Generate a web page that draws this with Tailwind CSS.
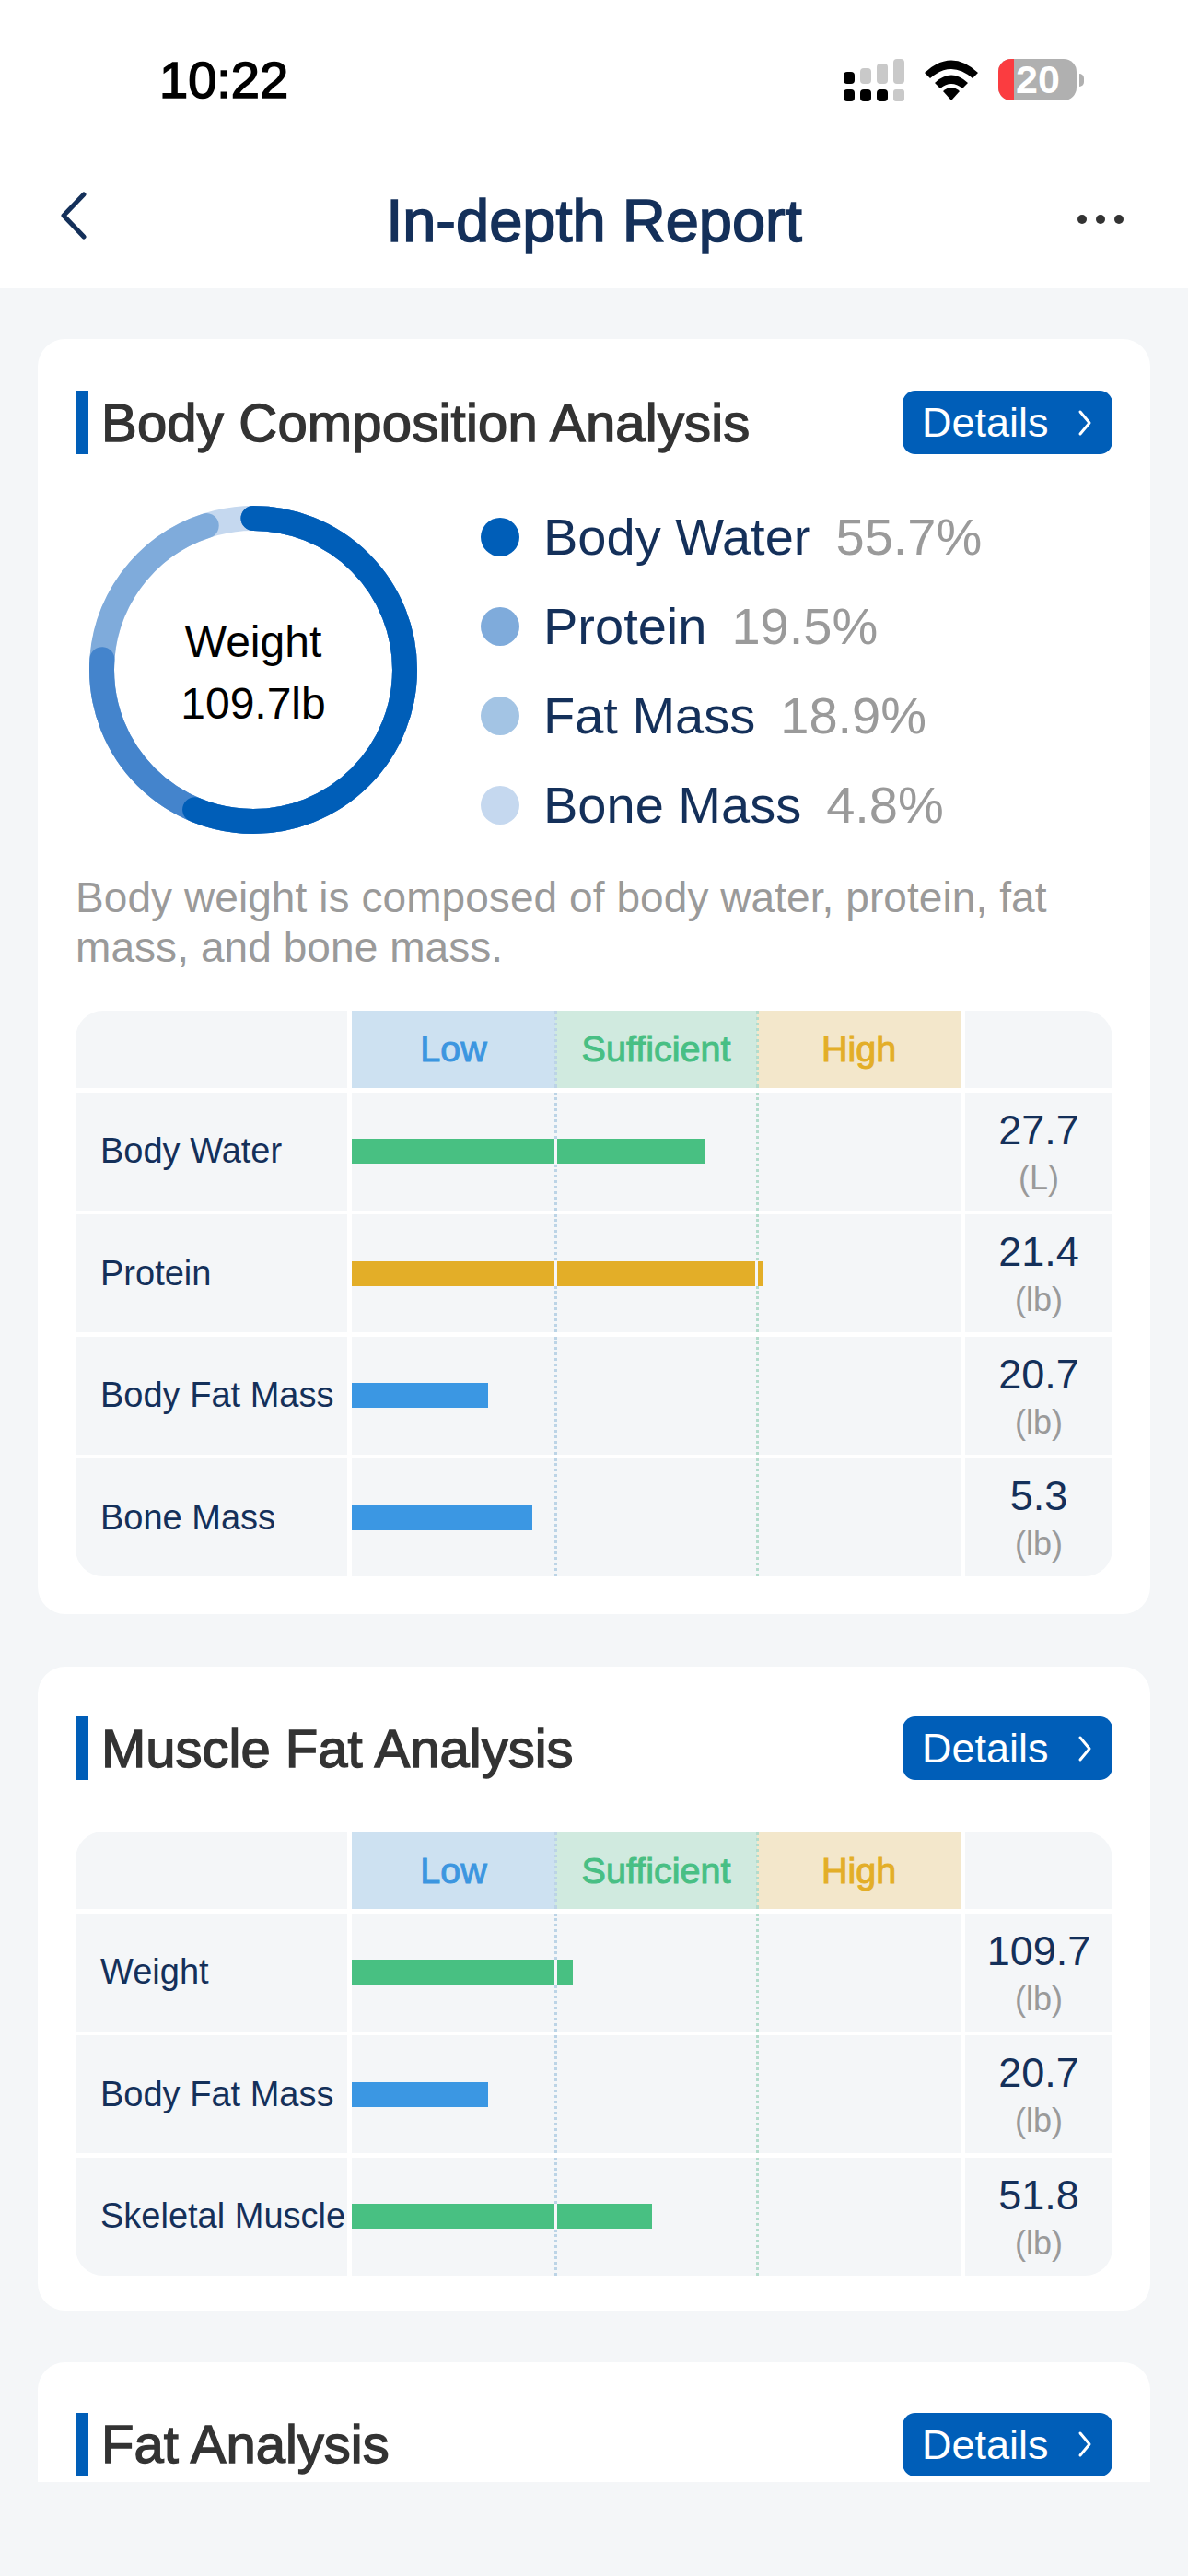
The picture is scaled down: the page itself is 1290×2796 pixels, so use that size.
<!DOCTYPE html>
<html lang="en">
<head>
<meta charset="utf-8">
<title>In-depth Report</title>
<script src="https://cdn.jsdelivr.net/npm/@tailwindcss/browser@4"></script>
</head>
<body class="bg-[#f4f6f8] font-['Liberation_Sans',sans-serif]">
<div class="w-[1290px] h-[2796px] overflow-hidden bg-[#f4f6f8]">
  <!-- status + nav -->
  <header class="bg-white h-[313px]">
    <div class="h-[175px] relative">
      <div class="flex items-center justify-between h-[175px] pl-[173px] pr-[113px]">
        <span class="text-[56px] leading-none text-black [-webkit-text-stroke:1.6px_#000] -mt-[1px]">10:22</span>
        <div class="flex items-center pb-[2px]">
          <svg width="66" height="46" viewBox="0 0 66 46" class="mr-[22px]">
            <rect x="0" y="14" width="12" height="13" rx="4" fill="#000"/>
            <rect x="18" y="10" width="12" height="17" rx="4" fill="#c9c9c9"/>
            <rect x="36" y="5" width="12" height="22" rx="4" fill="#c9c9c9"/>
            <rect x="54" y="0" width="12" height="27" rx="4" fill="#c9c9c9"/>
            <rect x="0" y="33" width="12" height="13" rx="4" fill="#000"/>
            <rect x="18" y="33" width="12" height="13" rx="4" fill="#000"/>
            <rect x="36" y="33" width="12" height="13" rx="4" fill="#000"/>
            <rect x="54" y="33" width="12" height="13" rx="3" fill="#c9c9c9"/>
          </svg>
          <svg width="58" height="44" viewBox="0 0 58 44" class="mr-[22px]">
            <path d="M0 14 Q29 -13 58 14 L52 20 Q29 0 6 20 Z" fill="#000"/>
            <path d="M11 25 Q29 8 47 25 L41 31 Q29 21 17 31 Z" fill="#000"/>
            <path d="M20 34 Q29 26 38 34 L29 44 Z" fill="#000"/>
          </svg>
          <div class="relative w-[85px] h-[45px] rounded-[14px] bg-[#b0b0b0]">
            <div class="absolute left-0 top-0 bottom-0 w-[17px] rounded-l-[14px] bg-[#fb3c40]"></div>
            <span class="absolute left-[18px] top-0 w-[50px] text-center text-[43px] leading-[45px] font-bold text-white">20</span>
          </div>
          <div class="w-[5px] h-[14px] ml-[3px] rounded-r-full bg-[#b0b0b0]"></div>
        </div>
      </div>
    </div>
    <div class="relative h-[138px]">
      <svg width="32" height="52" viewBox="0 0 32 52" class="absolute left-[64px] top-[33px]">
        <path d="M27 3 L5 26 L27 49" fill="none" stroke="#14305a" stroke-width="5" stroke-linecap="round" stroke-linejoin="round"/>
      </svg>
      <h1 class="text-center text-[65px] leading-[90px] pt-[20px] text-[#14305a] [-webkit-text-stroke:1.6px_#14305a]">In-depth Report</h1>
      <div class="absolute left-[1170px] top-[58px] flex gap-[10px]">
        <span class="w-[10px] h-[10px] rounded-full bg-[#333]"></span>
        <span class="w-[10px] h-[10px] rounded-full bg-[#333]"></span>
        <span class="w-[10px] h-[10px] rounded-full bg-[#333]"></span>
      </div>
    </div>
  </header>

  <main class="pt-[55px] px-[41px]">
    <!-- Card 1 -->
    <section class="bg-white rounded-[30px] px-[41px] pt-[56px] pb-[41px] mb-[57px]">
      <div class="flex items-center justify-between h-[69px]">
        <div class="flex items-center h-full">
          <span class="w-[14px] h-full bg-[#005eb8]"></span>
          <h2 class="ml-[14px] text-[58px] leading-none tracking-[0.2px] text-[#333] [-webkit-text-stroke:1.4px_#333]">Body Composition Analysis</h2>
        </div>
        <a class="flex items-center justify-between w-[228px] h-[69px] pl-[21px] pr-[22px] rounded-[14px] bg-[#005eb8] text-white text-[45px] leading-none">Details
          <svg width="16" height="30" viewBox="0 0 16 30"><path d="M3 3 L13 15 L3 27" fill="none" stroke="#fff" stroke-width="3" stroke-linecap="round" stroke-linejoin="round"/></svg>
        </a>
      </div>
      <div class="flex items-center h-[356px] mt-[56px] pl-[15px]">
        <div class="relative w-[356px] h-[356px] shrink-0">
          <svg width="356" height="356" viewBox="0 0 356 356">
            <g fill="none" stroke-width="27" stroke-linecap="round" transform="rotate(-90 178 178)">
              <circle cx="178" cy="178" r="164.5" stroke="#c5d8ef"/>
              <circle cx="178" cy="178" r="164.5" stroke="#7fabdb" pathLength="100" stroke-dasharray="95 100"/>
              <circle cx="178" cy="178" r="164.5" stroke="#4484cc" pathLength="100" stroke-dasharray="76.1 100"/>
              <circle cx="178" cy="178" r="164.5" stroke="#005eb8" pathLength="100" stroke-dasharray="56.3 100"/>
            </g>
          </svg>
          <div class="absolute inset-0 flex flex-col items-center justify-center pt-[5px] text-black text-[48px] leading-[67px]">
            <span>Weight</span>
            <span>109.7lb</span>
          </div>
        </div>
        <ul class="ml-[69px] mt-[3px] flex flex-col text-[56px] text-[#14305a]">
          <li class="flex items-center h-[97px]"><span class="w-[42px] h-[42px] rounded-full bg-[#005eb8] mr-[26px]"></span>Body Water<span class="ml-[27px] text-[#9a9a9a]">55.7%</span></li>
          <li class="flex items-center h-[97px]"><span class="w-[42px] h-[42px] rounded-full bg-[#7fabdb] mr-[26px]"></span>Protein<span class="ml-[27px] text-[#9a9a9a]">19.5%</span></li>
          <li class="flex items-center h-[97px]"><span class="w-[42px] h-[42px] rounded-full bg-[#a3c4e4] mr-[26px]"></span>Fat Mass<span class="ml-[27px] text-[#9a9a9a]">18.9%</span></li>
          <li class="flex items-center h-[97px]"><span class="w-[42px] h-[42px] rounded-full bg-[#c5d8ef] mr-[26px]"></span>Bone Mass<span class="ml-[27px] text-[#9a9a9a]">4.8%</span></li>
        </ul>
      </div>
      <p class="mt-[42px] text-[46px] leading-[54px] tracking-[0.07px] text-[#9a9a9a]">Body weight is composed of body water, protein, fat<br>mass, and bone mass.</p>

      <div class="mt-[42px] grid grid-cols-[295px_661px_160px] gap-x-[5px] gap-y-[4.5px] text-[#14305a]">
        <div class="h-[84px] bg-[#f4f6f8] rounded-tl-[30px]"></div>
        <div class="h-[84px] grid grid-cols-[221px_219px_221px] text-[39.5px] text-center leading-[83px] relative [-webkit-text-stroke:1px]">
          <span class="bg-[#cde1f1] text-[#3c96e0]">Low</span>
          <span class="bg-[#d0eadf] text-[#48bf84]">Sufficient</span>
          <span class="bg-[#f3e7cb] text-[#e3ae28]">High</span>
          <i class="absolute left-[220px] top-0 bottom-0 border-l-[3px] border-dotted border-[#bcd4e6]"></i>
          <i class="absolute left-[439px] top-0 bottom-0 border-l-[3px] border-dotted border-[#b4dccc]"></i>
        </div>
        <div class="h-[84px] bg-[#f4f6f8] rounded-tr-[30px]"></div>

        <div class="h-[128px] bg-[#f4f6f8] flex items-center pl-[27px] text-[38px] whitespace-nowrap">Body Water</div>
        <div class="h-[128px] bg-[#f4f6f8] relative flex items-center">
          <div class="relative h-[27px] bg-[#48c082] overflow-hidden w-[383px]"><i class="absolute left-[220px] top-0 bottom-0 w-[3px] bg-[#f4f6f8]"></i></div>
          <i class="absolute left-[220px] top-0 border-l-[3px] border-dotted border-[#bcd4e6] h-[50px]"></i>
          <i class="absolute left-[220px] top-[78px] border-l-[3px] border-dotted border-[#bcd4e6] h-[50px]"></i>
          <i class="absolute left-[439px] top-0 bottom-0 border-l-[3px] border-dotted border-[#b4dccc]"></i>
        </div>
        <div class="h-[128px] bg-[#f4f6f8] flex flex-col items-center justify-center pt-[6px]"><span class="text-[45px] leading-[52px]">27.7</span><span class="text-[36px] leading-[52px] text-[#9a9a9a]">(L)</span></div>

        <div class="h-[128px] bg-[#f4f6f8] flex items-center pl-[27px] text-[38px] whitespace-nowrap">Protein</div>
        <div class="h-[128px] bg-[#f4f6f8] relative flex items-center">
          <div class="relative h-[27px] bg-[#e3ae28] overflow-hidden w-[447px]"><i class="absolute left-[220px] top-0 bottom-0 w-[3px] bg-[#f4f6f8]"></i><i class="absolute left-[438px] top-0 bottom-0 w-[3px] bg-[#f4f6f8]"></i></div>
          <i class="absolute left-[220px] top-0 border-l-[3px] border-dotted border-[#bcd4e6] h-[50px]"></i>
          <i class="absolute left-[220px] top-[78px] border-l-[3px] border-dotted border-[#bcd4e6] h-[50px]"></i>
          <i class="absolute left-[439px] top-0 border-l-[3px] border-dotted border-[#b4dccc] h-[50px]"></i>
          <i class="absolute left-[439px] top-[78px] border-l-[3px] border-dotted border-[#b4dccc] h-[50px]"></i>
        </div>
        <div class="h-[128px] bg-[#f4f6f8] flex flex-col items-center justify-center pt-[6px]"><span class="text-[45px] leading-[52px]">21.4</span><span class="text-[36px] leading-[52px] text-[#9a9a9a]">(lb)</span></div>

        <div class="h-[128px] bg-[#f4f6f8] flex items-center pl-[27px] text-[38px] whitespace-nowrap">Body Fat Mass</div>
        <div class="h-[128px] bg-[#f4f6f8] relative flex items-center">
          <div class="h-[27px] bg-[#3b97e3] w-[148px]"></div>
          <i class="absolute left-[220px] top-0 bottom-0 border-l-[3px] border-dotted border-[#bcd4e6]"></i>
          <i class="absolute left-[439px] top-0 bottom-0 border-l-[3px] border-dotted border-[#b4dccc]"></i>
        </div>
        <div class="h-[128px] bg-[#f4f6f8] flex flex-col items-center justify-center pt-[6px]"><span class="text-[45px] leading-[52px]">20.7</span><span class="text-[36px] leading-[52px] text-[#9a9a9a]">(lb)</span></div>

        <div class="h-[128px] bg-[#f4f6f8] flex items-center pl-[27px] text-[38px] whitespace-nowrap rounded-bl-[30px]">Bone Mass</div>
        <div class="h-[128px] bg-[#f4f6f8] relative flex items-center">
          <div class="h-[27px] bg-[#3b97e3] w-[196px]"></div>
          <i class="absolute left-[220px] top-0 bottom-0 border-l-[3px] border-dotted border-[#bcd4e6]"></i>
          <i class="absolute left-[439px] top-0 bottom-0 border-l-[3px] border-dotted border-[#b4dccc]"></i>
        </div>
        <div class="h-[128px] bg-[#f4f6f8] flex flex-col items-center justify-center pt-[6px] rounded-br-[30px]"><span class="text-[45px] leading-[52px]">5.3</span><span class="text-[36px] leading-[52px] text-[#9a9a9a]">(lb)</span></div>
      </div>
    </section>

    <!-- Card 2 -->
    <section class="bg-white rounded-[30px] px-[41px] pt-[54px] pb-[38px] mb-[56px]">
      <div class="flex items-center justify-between h-[69px]">
        <div class="flex items-center h-full">
          <span class="w-[14px] h-full bg-[#005eb8]"></span>
          <h2 class="ml-[14px] text-[58px] leading-none text-[#333] [-webkit-text-stroke:1.4px_#333]">Muscle Fat Analysis</h2>
        </div>
        <a class="flex items-center justify-between w-[228px] h-[69px] pl-[21px] pr-[22px] rounded-[14px] bg-[#005eb8] text-white text-[45px] leading-none">Details
          <svg width="16" height="30" viewBox="0 0 16 30"><path d="M3 3 L13 15 L3 27" fill="none" stroke="#fff" stroke-width="3" stroke-linecap="round" stroke-linejoin="round"/></svg>
        </a>
      </div>
      <div class="mt-[56px] grid grid-cols-[295px_661px_160px] gap-x-[5px] gap-y-[4.5px] text-[#14305a]">
        <div class="h-[84px] bg-[#f4f6f8] rounded-tl-[30px]"></div>
        <div class="h-[84px] grid grid-cols-[221px_219px_221px] text-[39.5px] text-center leading-[84px] relative [-webkit-text-stroke:1px]">
          <span class="bg-[#cde1f1] text-[#3c96e0]">Low</span>
          <span class="bg-[#d0eadf] text-[#48bf84]">Sufficient</span>
          <span class="bg-[#f3e7cb] text-[#e3ae28]">High</span>
          <i class="absolute left-[220px] top-0 bottom-0 border-l-[3px] border-dotted border-[#bcd4e6]"></i>
          <i class="absolute left-[439px] top-0 bottom-0 border-l-[3px] border-dotted border-[#b4dccc]"></i>
        </div>
        <div class="h-[84px] bg-[#f4f6f8] rounded-tr-[30px]"></div>

        <div class="h-[128px] bg-[#f4f6f8] flex items-center pl-[27px] text-[38px] whitespace-nowrap">Weight</div>
        <div class="h-[128px] bg-[#f4f6f8] relative flex items-center">
          <div class="relative h-[27px] bg-[#48c082] overflow-hidden w-[240px]"><i class="absolute left-[220px] top-0 bottom-0 w-[3px] bg-[#f4f6f8]"></i></div>
          <i class="absolute left-[220px] top-0 border-l-[3px] border-dotted border-[#bcd4e6] h-[50px]"></i>
          <i class="absolute left-[220px] top-[78px] border-l-[3px] border-dotted border-[#bcd4e6] h-[50px]"></i>
          <i class="absolute left-[439px] top-0 bottom-0 border-l-[3px] border-dotted border-[#b4dccc]"></i>
        </div>
        <div class="h-[128px] bg-[#f4f6f8] flex flex-col items-center justify-center pt-[6px]"><span class="text-[45px] leading-[52px]">109.7</span><span class="text-[36px] leading-[52px] text-[#9a9a9a]">(lb)</span></div>

        <div class="h-[128px] bg-[#f4f6f8] flex items-center pl-[27px] text-[38px] whitespace-nowrap">Body Fat Mass</div>
        <div class="h-[128px] bg-[#f4f6f8] relative flex items-center">
          <div class="h-[27px] bg-[#3b97e3] w-[148px]"></div>
          <i class="absolute left-[220px] top-0 bottom-0 border-l-[3px] border-dotted border-[#bcd4e6]"></i>
          <i class="absolute left-[439px] top-0 bottom-0 border-l-[3px] border-dotted border-[#b4dccc]"></i>
        </div>
        <div class="h-[128px] bg-[#f4f6f8] flex flex-col items-center justify-center pt-[6px]"><span class="text-[45px] leading-[52px]">20.7</span><span class="text-[36px] leading-[52px] text-[#9a9a9a]">(lb)</span></div>

        <div class="h-[128px] bg-[#f4f6f8] flex items-center pl-[27px] text-[38px] whitespace-nowrap rounded-bl-[30px]">Skeletal Muscle</div>
        <div class="h-[128px] bg-[#f4f6f8] relative flex items-center">
          <div class="relative h-[27px] bg-[#48c082] overflow-hidden w-[326px]"><i class="absolute left-[220px] top-0 bottom-0 w-[3px] bg-[#f4f6f8]"></i></div>
          <i class="absolute left-[220px] top-0 border-l-[3px] border-dotted border-[#bcd4e6] h-[50px]"></i>
          <i class="absolute left-[220px] top-[78px] border-l-[3px] border-dotted border-[#bcd4e6] h-[50px]"></i>
          <i class="absolute left-[439px] top-0 bottom-0 border-l-[3px] border-dotted border-[#b4dccc]"></i>
        </div>
        <div class="h-[128px] bg-[#f4f6f8] flex flex-col items-center justify-center pt-[6px] rounded-br-[30px]"><span class="text-[45px] leading-[52px]">51.8</span><span class="text-[36px] leading-[52px] text-[#9a9a9a]">(lb)</span></div>
      </div>
    </section>

    <!-- Card 3, cut off by the bottom edge -->
    <div class="h-[130px] overflow-hidden">
      <section class="bg-white rounded-t-[30px] px-[41px] pt-[55px] h-[130px]">
        <div class="flex items-center justify-between h-[69px]">
          <div class="flex items-center h-full">
            <span class="w-[14px] h-full bg-[#005eb8]"></span>
            <h2 class="ml-[14px] text-[58px] leading-none text-[#333] [-webkit-text-stroke:1.4px_#333]">Fat Analysis</h2>
          </div>
          <a class="flex items-center justify-between w-[228px] h-[69px] pl-[21px] pr-[22px] rounded-[14px] bg-[#005eb8] text-white text-[45px] leading-none">Details
            <svg width="16" height="30" viewBox="0 0 16 30"><path d="M3 3 L13 15 L3 27" fill="none" stroke="#fff" stroke-width="3" stroke-linecap="round" stroke-linejoin="round"/></svg>
          </a>
        </div>
      </section>
    </div>
  </main>
</div>
</body>
</html>
